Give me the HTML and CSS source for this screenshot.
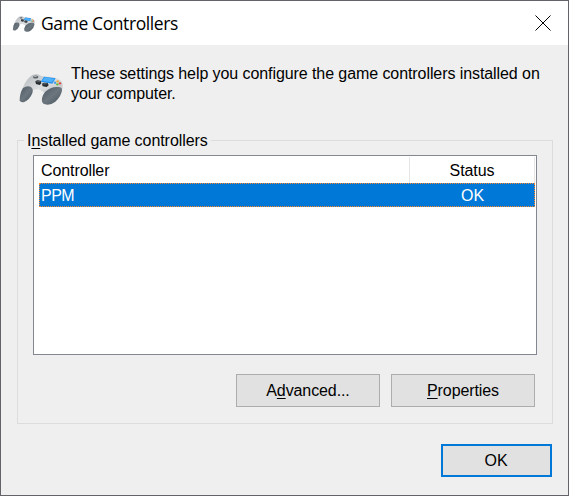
FILE: index.html
```html
<!DOCTYPE html>
<html lang="en">
<head>
<meta charset="utf-8">
<title>Game Controllers</title>
<link rel="stylesheet" href="styles.css">
</head>
<body>
<svg class="defs" aria-hidden="true">
  <defs>
    <linearGradient id="grip" x1="0" y1="0" x2="1" y2="1"><stop offset="0" stop-color="#4d5861"/><stop offset=".5" stop-color="#6b767f"/><stop offset="1" stop-color="#48535c"/></linearGradient>
    <linearGradient id="shell" x1="0" y1="0" x2="1" y2="1"><stop offset="0" stop-color="#b3b7bb"/><stop offset=".5" stop-color="#dcdee0"/><stop offset="1" stop-color="#b0b4b8"/></linearGradient>
    <symbol id="pad" viewBox="0 0 150 120">
      <path fill="url(#shell)" d="M15 82Q24 48 42 32Q49 24 65 25L78 31L108 33Q130 37 138 48Q143 58 136 78L118 96L82 100L84 80Q80 74 67 70L48 72L32 84Z"/>
      <path fill="url(#grip)" d="M21 66Q34 58 45 63Q53 69 49 82Q41 101 25 108Q13 111 11 103Q11 82 21 66Z"/>
      <path fill="url(#grip)" d="M88 77Q105 61 126 63Q139 63 138 73Q135 93 118 107Q103 119 87 115Q76 114 78 97Q81 84 88 77Z"/>
      <path fill="#2793ee" d="M84 32L119 37L109 53L74 47Z"/>
      <path fill="#4fb0fb" d="M87 34L115 39L107 49L78 44Z"/>
      <ellipse cx="59" cy="33" rx="8" ry="4.5" fill="#5b6065"/>
      <ellipse cx="58" cy="31" rx="5" ry="2" fill="#aeb3b7"/>
      <path fill="#252a2e" d="M58 46L64 43L74 44L76 52L71 57L60 54Z"/>
      <path fill="#525960" d="M61 46L65 44L73 45L72 49L62 49Z"/>
      <path fill="#252a2e" d="M78 53L83 50L95 51L98 58L92 63L80 61Z"/>
      <path fill="#525960" d="M81 53L84 51L93 52L94 55L82 56Z"/>
      <circle cx="125" cy="46" r="3.5" fill="#f0a62d"/>
      <circle cx="117" cy="50" r="3.5" fill="#3c9dec"/>
      <circle cx="132" cy="52" r="3.5" fill="#e6463b"/>
      <circle cx="124" cy="55" r="3.5" fill="#64b93c"/>
    </symbol>
  </defs>
</svg>
<main class="window">
  <header class="titlebar">
    <svg class="title-icon"><use href="#pad"/></svg>
    <h1 class="title">Game Controllers</h1>
    <svg class="close" viewBox="0 0 16 16"><path d="M.5 .5L15.5 15.5M15.5 .5L.5 15.5"/></svg>
  </header>
  <section class="intro">
    <svg class="intro-icon"><use href="#pad"/></svg>
    <p class="intro-text">These settings help you configure the game controllers installed on<br>your computer.</p>
  </section>
  <fieldset class="group">
    <legend class="legend">I<u>n</u>stalled game controllers</legend>
    <div class="list">
      <div class="row head"><span class="name">Controller</span><span class="status">Status</span></div>
      <div class="row selected"><span class="name ppm">PPM</span><span class="status">OK</span></div>
    </div>
    <div class="actions">
      <button class="button">A<u>d</u>vanced...</button>
      <button class="button"><u>P</u>roperties</button>
    </div>
  </fieldset>
  <footer class="footer"><button class="button primary">OK</button></footer>
</main>
</body>
</html>
```

FILE: styles.css
```css
* { box-sizing: border-box; }
body { margin: 0; color: #000; font: 16px/20px "Liberation Sans", Arial, sans-serif; }
.defs { position: absolute; width: 0; height: 0; }
.window { width: 569px; height: 496px; border: 1px solid #636468; background: #efefef; overflow: hidden; }
.titlebar { height: 44px; display: flex; align-items: flex-start; background: #fff; padding: 0 17px 0 10px; }
.title-icon { width: 25.5px; height: 20.5px; margin-top: 11px; }
.title { margin: 10px auto 0 4.5px; font: 17.5px/24px "Open Sans", "Noto Sans", sans-serif; letter-spacing: -.4px; }
.close { width: 16px; height: 16px; margin-top: 14px; fill: none; stroke: #000; stroke-width: 1; }
.intro { height: 86px; display: flex; padding: 21px 0 0 15px; }
.intro-icon { width: 50px; height: 40px; flex: none; }
.intro-text { margin: -2px 0 0 5px; white-space: nowrap; letter-spacing: -.08px; }
.group { width: 536px; height: 293px; margin: 0 0 0 16px; padding: 5px 15px 0; border: 1px solid #dcdcdc; }
.legend { margin-left: -9px; padding: 0 3px 0 3px; height: 19px; line-height: 19px; letter-spacing: -.06px; }
u { text-decoration-thickness: 1px; text-underline-offset: 2px; }
.list { width: 504px; height: 200px; border: 1px solid #828790; background: #fff; padding: 1px 1px 0 5px; }
.row { display: flex; height: 25px; line-height: 25px; }
.name { width: 371px; padding-left: 2px; }
.status { flex: 1; text-align: center; }
.head { height: 26px; line-height: 27px; letter-spacing: -.1px; }
.head .name, .head .status { border-right: 1px solid #e5e5e5; }
.selected { height: 24px; background: #0078d7; color: #fff; outline: 1px dotted #ff8728; outline-offset: -1px; }
.ppm { letter-spacing: -.5px; }
.actions { display: flex; justify-content: flex-end; gap: 11px; margin: 19px 2px 0 0; }
.button { width: 144px; height: 33px; padding: 0; border: 1px solid #adadad; background: #e1e1e1; color: #000; font: inherit; letter-spacing: -.1px; }
.footer { display: flex; justify-content: flex-end; padding: 20px 16px 0 0; }
.primary { width: 111px; border: 2px solid #0078d7; padding-right: 1px; }
```
